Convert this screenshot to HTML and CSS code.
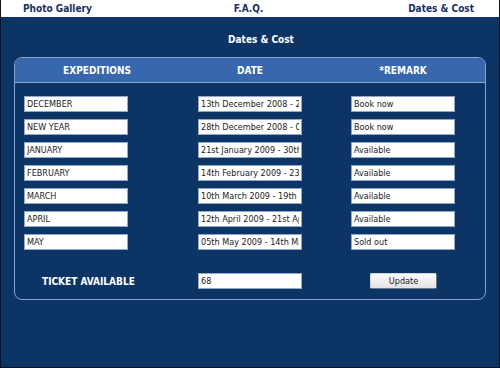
FILE: index.html
```html
<!DOCTYPE html>
<html lang="en">
<head>
    <meta charset="UTF-8">
    <title>Dates &amp; Cost</title>
    <link rel="stylesheet" href="styles.css">
</head>
<body>
    <div class="page">
        <div class="nav">
            <a href="#" class="nav-left">Photo Gallery</a>
            <a href="#" class="nav-mid">F.A.Q.</a>
            <a href="#" class="nav-right">Dates &amp; Cost</a>
        </div>
        <h1>Dates &amp; Cost</h1>
        <div class="panel">
            <div class="panel-head">
                <span>EXPEDITIONS</span>
                <span>DATE</span>
                <span>*REMARK</span>
            </div>
            <div class="rows">
                <input type="text" value="DECEMBER">
                <input type="text" value="13th December 2008 - 22nd December 2008">
                <input type="text" value="Book now">

                <input type="text" value="NEW YEAR">
                <input type="text" value="28th December 2008 - 06th January 2009">
                <input type="text" value="Book now">

                <input type="text" value="JANUARY">
                <input type="text" value="21st January 2009 - 30th January 2009">
                <input type="text" value="Available">

                <input type="text" value="FEBRUARY">
                <input type="text" value="14th February 2009 - 23rd February 2009">
                <input type="text" value="Available">

                <input type="text" value="MARCH">
                <input type="text" value="10th March 2009 - 19th March 2009">
                <input type="text" value="Available">

                <input type="text" value="APRIL">
                <input type="text" value="12th April 2009 - 21st April 2009">
                <input type="text" value="Available">

                <input type="text" value="MAY">
                <input type="text" value="05th May 2009 - 14th May 2009">
                <input type="text" value="Sold out">
            </div>
            <div class="ticket-row">
                <label for="tickets">TICKET AVAILABLE</label>
                <input type="text" id="tickets" value="68">
                <button>Update</button>
            </div>
        </div>
    </div>
</body>
</html>
```

FILE: styles.css
```css
body {
    margin: 0;
    padding: 0;
    font-family: "DejaVu Sans Condensed", "DejaVu Sans", sans-serif;
}
.page {
    width: 500px;
    height: 368px;
    box-sizing: border-box;
    background: #0c3566;
    border-left: 1px solid #111;
    border-right: 1px solid #111;
    border-bottom: 1px solid #111;
    overflow: hidden;
}
.nav {
    display: grid;
    grid-template-columns: 1fr auto 1fr;
    align-items: center;
    height: 17px;
    padding: 0 25px 0 22px;
    background: #fff;
}
.nav a {
    color: #17305f;
    font-weight: bold;
    font-size: 10px;
    text-decoration: none;
}
.nav-right {
    justify-self: end;
}
h1 {
    margin: 0;
    padding: 17px 0 0 22px;
    height: 12px;
    line-height: 12px;
    font-size: 10px;
    color: #fff;
    text-align: center;
}
.panel {
    margin: 11px 13px 0 13px;
    border: 1px solid #88a5d1;
    border-radius: 8px;
    overflow: hidden;
    padding-bottom: 10px;
}
.panel-head {
    display: grid;
    grid-template-columns: 164px 142px 1fr;
    height: 24px;
    align-items: center;
    background: #3767ac;
    border-bottom: 1px solid #88a5d1;
}
.panel-head span {
    text-align: center;
    color: #fff;
    font-weight: bold;
    font-size: 10px;
}
.rows, .ticket-row {
    display: grid;
    grid-template-columns: 174px 153px 1fr;
    row-gap: 7px;
    padding-left: 9px;
}
.rows {
    padding-top: 13px;
}
.ticket-row {
    margin-top: 23px;
    align-items: center;
}
input {
    width: 104px;
    height: 16px;
    box-sizing: border-box;
    margin: 0;
    padding: 0 2px;
    border: 1px solid #8fa8cc;
    background: #fff;
    color: #222;
    font-family: "DejaVu Sans Condensed", "DejaVu Sans", sans-serif;
    font-size: 9px;
    outline: none;
}
.ticket-row label {
    padding-left: 18px;
    color: #fff;
    font-weight: bold;
    font-size: 10px;
}
button {
    justify-self: start;
    margin-left: 19px;
    width: 67px;
    height: 16px;
    padding: 0;
    border: 1px solid;
    border-color: #d6d6d6 #6d7889 #6d7889 #d6d6d6;
    border-radius: 2px;
    background: linear-gradient(#fdfdfd, #e2e2e2);
    color: #222;
    font-family: "DejaVu Sans Condensed", "DejaVu Sans", sans-serif;
    font-size: 9px;
    cursor: pointer;
}
```
